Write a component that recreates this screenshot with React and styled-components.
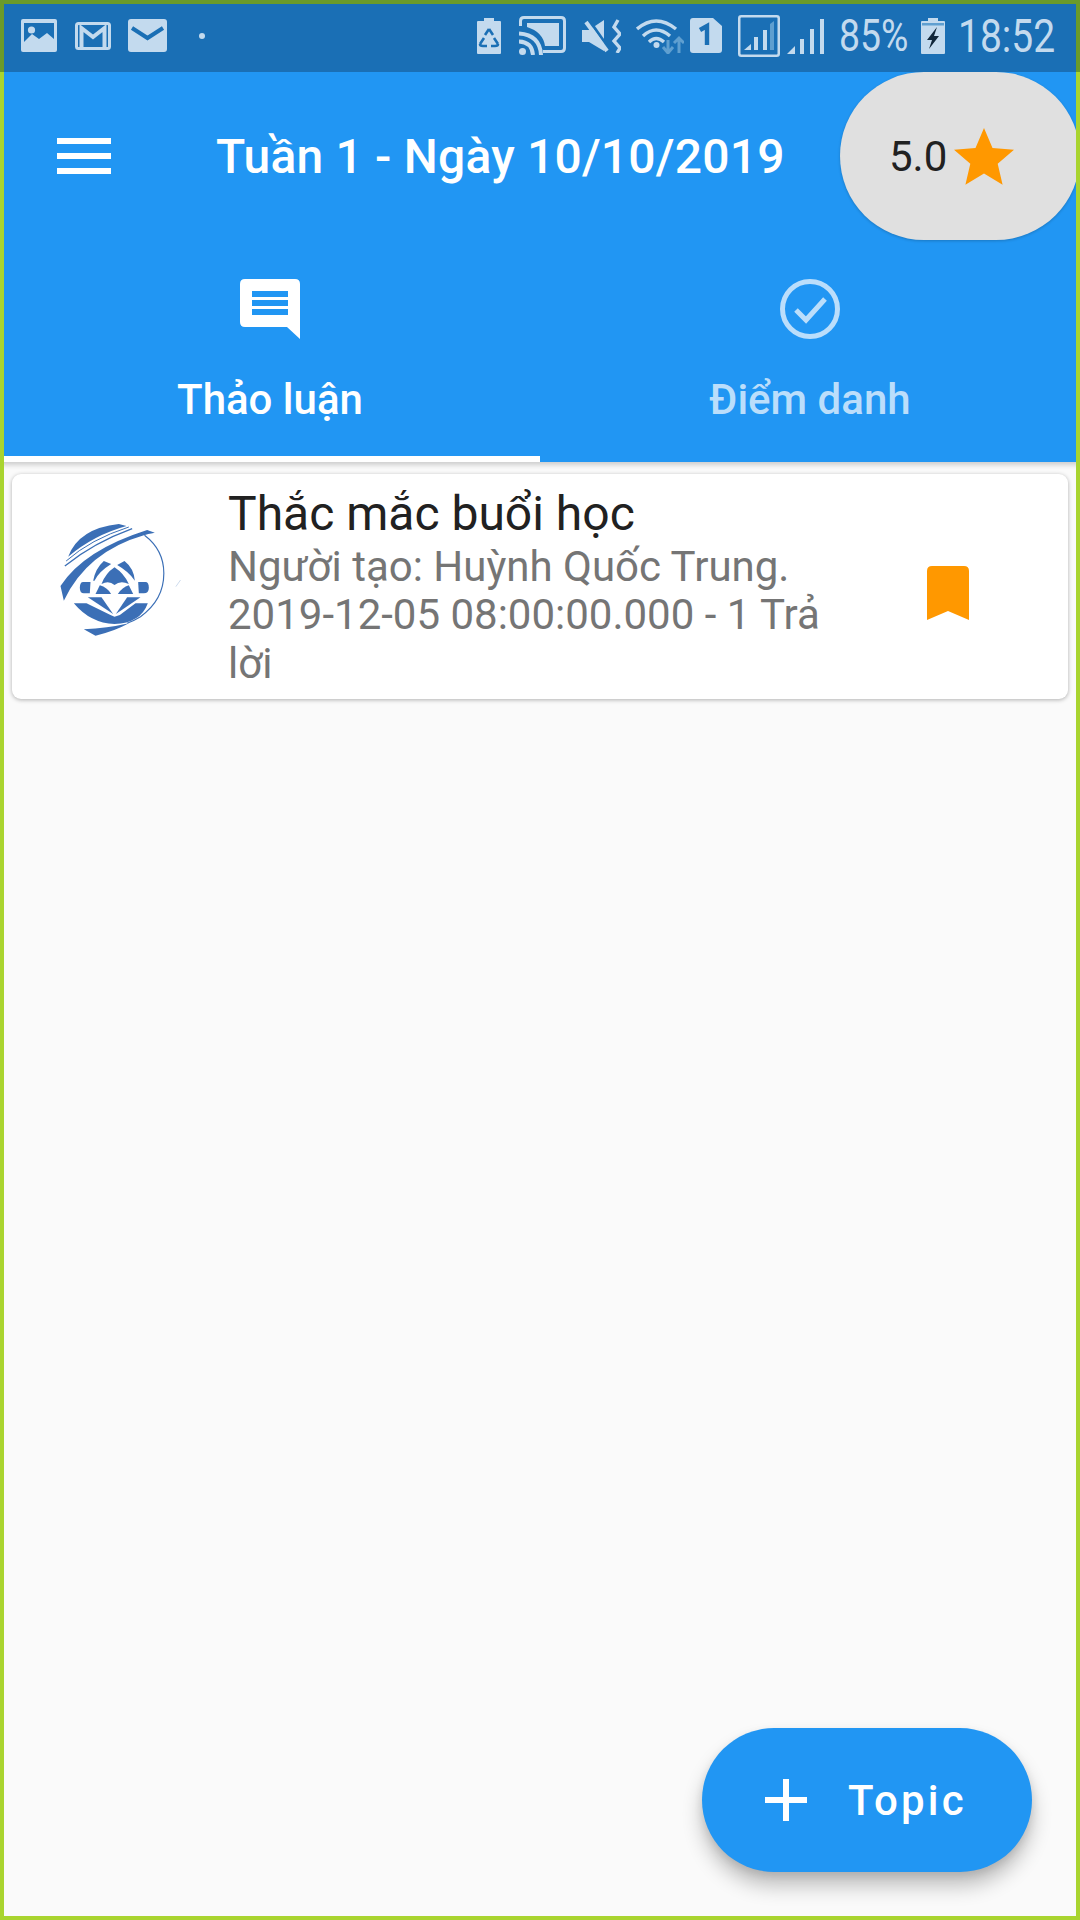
import React from 'react';
import styled, { createGlobalStyle } from 'styled-components';

const Global = createGlobalStyle`
  html, body { margin: 0; padding: 0; background: #fafafa; }
  * { box-sizing: border-box; }
`;

const Frame = styled.div`
  width: 1080px;
  height: 1920px;
  position: relative;
  overflow: hidden;
  display: flex;
  flex-direction: column;
  background: #fafafa;
  font-family: Roboto, "Noto Sans", sans-serif;
  &::after {
    content: "";
    position: absolute;
    inset: 0;
    border: 4px solid #a9d42f;
    pointer-events: none;
    z-index: 3;
  }
`;

const StatusBar = styled.div`
  height: 72px;
  flex: none;
  position: relative;
  z-index: 4;
  padding: 0 22px 5px 17px;
  background: #1a6fb5;
  border: solid #6a9a2a;
  border-width: 4px 4px 0 4px;
  display: flex;
  align-items: center;
  justify-content: space-between;
  color: #c3daee;
`;

const StatusGroup = styled.div`
  display: flex;
  align-items: center;
`;

const Slot = styled.span`
  display: flex;
  align-items: center;
  margin-left: ${p => p.$ml || 0}px;
`;

const StatusText = styled.span`
  display: block;
  width: ${p => p.$w}px;
  margin-left: ${p => p.$ml}px;
  font-size: ${p => p.$size}px;
  line-height: 1;
  white-space: nowrap;
  transform: scaleX(${p => p.$sx});
  transform-origin: left center;
`;

const AppBar = styled.header`
  background: #2196f3;
  height: 390px;
  flex: none;
  display: flex;
  flex-direction: column;
  box-shadow: 0 3px 5px rgba(0,0,0,0.18);
  position: relative;
  z-index: 1;
`;

const TopRow = styled.div`
  height: 168px;
  display: flex;
  align-items: center;
  position: relative;
`;

const Menu = styled.button`
  background: none;
  border: 0;
  padding: 0;
  width: 54px;
  height: 36px;
  margin-left: 57px;
  display: flex;
  flex-direction: column;
  justify-content: space-between;
`;

const MenuLine = styled.span`
  display: block;
  height: 6px;
  width: 54px;
  background: #fff;
`;

const Title = styled.h1`
  margin: 2px 0 0 105px;
  font-size: 48px;
  letter-spacing: 0.2px;
  font-weight: 500;
  color: #fff;
  white-space: nowrap;
  line-height: 1;
`;

const RatingPill = styled.div`
  position: absolute;
  left: 840px;
  top: 0;
  width: 240px;
  height: 168px;
  background: #e0e0e0;
  border-radius: 84px;
  display: flex;
  align-items: center;
  padding-left: 49px;
  box-shadow: 0 1px 3px rgba(0,0,0,0.2);
`;

const RatingText = styled.span`
  font-size: 42px;
  color: #212121;
  font-weight: 400;
`;

const StarWrap = styled.span`
  display: flex;
  margin-left: 7px;
`;

const TabRow = styled.div`
  flex: 1;
  display: flex;
`;

const Tab = styled.div`
  width: 50%;
  height: 222px;
  display: flex;
  flex-direction: column;
  align-items: center;
  padding-top: 39px;
  color: ${p => (p.$active ? '#fff' : '#bbdefb')};
  border-bottom: 6px solid ${p => (p.$active ? '#fff' : 'transparent')};
`;

const TabLabel = styled.span`
  font-size: 42px;
  font-weight: 500;
  line-height: 1;
  margin-top: 40px;
  white-space: nowrap;
`;

const List = styled.main`
  flex: 1;
  padding: 12px 12px 0 12px;
`;

const Card = styled.article`
  background: #fff;
  border-radius: 9px;
  height: 225px;
  width: 1056px;
  display: flex;
  align-items: flex-start;
  box-shadow: 0 1px 4px rgba(0,0,0,0.3);
`;

const Logo = styled.div`
  width: 216px;
  flex: none;
  padding: 46px 0 0 45px;
  line-height: 0;
`;

const CardBody = styled.div`
  width: 600px;
  flex: none;
  padding-top: 13px;
`;

const CardTitle = styled.div`
  font-size: 48px;
  color: #212121;
  line-height: 54px;
  white-space: nowrap;
`;

const CardSub = styled.div`
  font-size: 42px;
  color: #757575;
  line-height: 48.4px;
  margin-top: 2px;
`;

const Bookmark = styled.div`
  margin-left: 99px;
  padding-top: 92px;
  flex: none;
  line-height: 0;
`;

const Fab = styled.button`
  position: absolute;
  left: 702px;
  top: 1728px;
  width: 330px;
  height: 144px;
  border: 0;
  border-radius: 72px;
  background: #2196f3;
  color: #fff;
  display: flex;
  align-items: center;
  padding: 0 0 0 63px;
  box-shadow: 0 14px 20px rgba(0,0,0,0.24), 0 4px 8px rgba(0,0,0,0.1);
  font-family: Roboto, sans-serif;
`;

const FabLabel = styled.span`
  font-size: 42px;
  font-weight: 500;
  letter-spacing: 3.2px;
  margin: 2px 0 0 41px;
  line-height: 1;
`;

const L = '#c3daee';
const D = '#1a6fb5';
const M = '#5f9fd0';

const ImgIcon = () => (
  <svg width="36" height="33" viewBox="0 0 36 33"><rect width="36" height="33" rx="2" fill={L}/><path d="M3 4 H33 V20 L26 14 L18 20 L11 15 L3 23Z" fill={D}/><circle cx="10.5" cy="11" r="3.6" fill={L}/></svg>
);
const GmailOutline = () => (
  <svg width="36" height="28" viewBox="0 0 36 28"><rect x="1.5" y="1.5" width="33" height="25" rx="2" fill="none" stroke={L} strokeWidth="3"/><path d="M6.5 26 V6 L18 15 L29.5 6 V26" fill="none" stroke={L} strokeWidth="4"/></svg>
);
const MailFilled = () => (
  <svg width="39" height="33" viewBox="0 0 39 33"><rect width="39" height="33" rx="3" fill={L}/><path d="M4 9 L19.5 19 L35 9" fill="none" stroke={D} strokeWidth="4"/></svg>
);
const BatteryRecycle = () => (
  <svg width="24" height="36" viewBox="0 0 24 36"><path d="M7 0 H17 V3 H23 Q24 3 24 4 V35 Q24 36 23 36 H1 Q0 36 0 35 V4 Q0 3 1 3 H7Z" fill={L}/><path d="M12 11 L16 17 M8 17 L12 11 M3 26 L7 20 M3 26 Q3 28 6 28 H10 M21 26 L17 20 M21 26 Q21 28 18 28 H14" stroke={D} strokeWidth="2.6" fill="none"/></svg>
);
const Cast = () => (
  <svg width="47" height="39" viewBox="0 0 47 39"><path d="M1.5 10 V5 Q1.5 1.5 5 1.5 H42 Q45.5 1.5 45.5 5 V32 Q45.5 35.5 42 35.5 H24" fill="none" stroke={L} strokeWidth="3"/><path d="M8 7 H40 V30 H26 Q24 16 8 11Z" fill={L}/><path d="M0 17.5 Q21 19 22 39 M0 25.5 Q13 26 14 39" fill="none" stroke={L} strokeWidth="4"/><circle cx="3.5" cy="35.5" r="3.5" fill={L}/></svg>
);
const MuteVibrate = () => (
  <svg width="39" height="34" viewBox="0 0 39 34"><path d="M0 11 H7 L22 1 V32 L7 23 H0Z" fill={L}/><path d="M7 1 L28 31" stroke={D} strokeWidth="3"/><path d="M4 3 L25 32" stroke={L} strokeWidth="4"/><path d="M36 1 L32 8 L38 15 L32 22 L38 29 L35 34" fill="none" stroke={L} strokeWidth="3.4"/></svg>
);
const WifiIcon = () => (
  <svg width="48" height="36" viewBox="0 0 48 36"><path d="M1 11 Q20 -5 40 11 M7 18 Q20 6 34 18 M13 24 Q20 17 28 24" fill="none" stroke={L} strokeWidth="3.4"/><circle cx="20.5" cy="27" r="3" fill={L}/><path d="M32 22 V35 M27 29 L32 35 L37 29" fill="none" stroke={M} strokeWidth="3"/><path d="M43 35 V20 M38 25 L43 20 L48 25" fill="none" stroke={M} strokeWidth="3"/></svg>
);
const SimOne = () => (
  <svg width="32" height="35" viewBox="0 0 32 35"><path d="M3 0 H23 L32 8 V32 Q32 35 29 35 H3 Q0 35 0 32 V3 Q0 0 3 0Z" fill={L}/><path d="M10 12 L17 8 V27" fill="none" stroke={D} strokeWidth="4.4"/></svg>
);
const SignalBox = () => (
  <svg width="42" height="42" viewBox="0 0 42 42"><rect x="1.25" y="1.25" width="39.5" height="39.5" rx="2" fill="none" stroke={L} strokeWidth="2.5"/><path d="M6 35 L13 29 V35Z" fill={L}/><rect x="16" y="22" width="4" height="13" fill={L}/><rect x="25" y="15" width="4" height="20" fill={L}/><path d="M32 9 L36 6 V35 H32Z" fill={M}/></svg>
);
const SignalBars = () => (
  <svg width="37" height="36" viewBox="0 0 37 36"><path d="M0 36 L8 28 V36Z" fill={L}/><rect x="13" y="21" width="4" height="15" fill={L}/><rect x="23" y="11" width="4" height="25" fill={L}/><rect x="33" y="1" width="4" height="35" fill={L}/></svg>
);
const BatteryCharge = () => (
  <svg width="24" height="36" viewBox="0 0 24 36"><path d="M7 0 H17 V3 H23 Q24 3 24 4 V35 Q24 36 23 36 H1 Q0 36 0 35 V4 Q0 3 1 3 H7Z" fill={L}/><rect x="1" y="5" width="22" height="2.5" fill={M}/><path d="M16 9 L6 22 H11 L8 31 L18 18 H13 L16 9Z" fill="#10263a"/></svg>
);
const StatusDot = () => (
  <svg width="6" height="6" viewBox="0 0 6 6"><circle cx="3" cy="3" r="3" fill={L}/></svg>
);

const ChatIcon = () => (
  <svg width="60" height="60" viewBox="0 0 60 60"><path d="M5 0 H55 Q60 0 60 5 V60 L47 48 H5 Q0 48 0 43 V5 Q0 0 5 0Z" fill="#fff"/><rect x="12" y="12" width="36" height="6" fill="#2196f3"/><rect x="12" y="21" width="36" height="6" fill="#2196f3"/><rect x="12" y="30" width="36" height="6" fill="#2196f3"/></svg>
);
const CheckCircle = () => (
  <svg width="60" height="60" viewBox="0 0 60 60"><circle cx="30" cy="30" r="27.5" fill="none" stroke="#bbdefb" strokeWidth="5"/><path d="M16 31 L26 41 L45 20" fill="none" stroke="#bbdefb" strokeWidth="5"/></svg>
);
const Star = () => (
  <svg width="60" height="57" viewBox="0 0 60 57"><path d="M30 0 L38.5 20 L60 21.7 L43.7 35.8 L48.6 56.8 L30 45.6 L11.4 56.8 L16.3 35.8 L0 21.7 L21.5 20Z" fill="#ff9800"/></svg>
);
const BookmarkIcon = () => (
  <svg width="42" height="54" viewBox="0 0 42 54"><path d="M5 0 H37 Q42 0 42 5 V54 L21 45 L0 54 V5 Q0 0 5 0Z" fill="#ff9800"/></svg>
);
const PlusIcon = () => (
  <svg width="42" height="42" viewBox="0 0 42 42"><rect x="18" y="0" width="6" height="42" fill="#fff"/><rect x="0" y="18" width="42" height="6" fill="#fff"/></svg>
);
const UniLogo = () => (
  <svg width="127" height="120" viewBox="170 180 380 360" fill="#3b6fb6">
    <path d="M203 290 Q235 205 355 192 L378 198 Q280 225 203 290Z"/>
    <path d="M197 303 Q270 238 385 201" fill="none" stroke="#3b6fb6" strokeWidth="3"/>
    <path d="M193 318 Q280 248 395 206" fill="none" stroke="#3b6fb6" strokeWidth="4"/>
    <path d="M180 378 Q250 270 440 210 L463 218 Q440 222 430 226 Q260 275 190 422Z"/>
    <path d="M432 226 Q490 270 490 340 Q490 420 420 470 Q400 482 380 490" fill="none" stroke="#3b6fb6" strokeWidth="3.5"/>
    <path d="M310 303 L332 312 Q295 335 282 362 L278 362 Q285 325 310 303Z"/>
    <path d="M372 303 L350 315 Q385 335 403 362 Q400 325 372 303Z"/>
    <path d="M342 322 Q370 340 385 372 Q360 360 342 375 Q325 360 303 372 Q315 340 342 322Z"/>
    <path d="M248 366 H270 L268 400 H250 Q238 400 238 383 Q238 366 248 366Z"/>
    <path d="M415 366 H435 Q445 366 445 383 Q445 400 430 400 H415 L413 366Z"/>
    <path d="M285 402 L298 376 Q320 382 332 402Z"/>
    <path d="M398 402 L385 376 Q365 382 352 402Z"/>
    <path d="M262 412 H303 L338 462Z"/>
    <path d="M420 412 H380 L346 462Z"/>
    <path d="M220 430 Q270 490 342 492 Q420 490 442 430 L405 430 L358 465 L342 470 L330 465 L258 430Z"/>
    <path d="M250 508 Q320 505 385 490 Q340 515 285 527Z"/>
    <path d="M526 380 L540 360" fill="none" stroke="#9ab6da" strokeWidth="1.5"/>
  </svg>
);

export default function App() {
  return (
    <Frame>
      <Global />
      <StatusBar>
        <StatusGroup>
          <ImgIcon />
          <Slot $ml={18}><GmailOutline /></Slot>
          <Slot $ml={17}><MailFilled /></Slot>
          <Slot $ml={32}><StatusDot /></Slot>
        </StatusGroup>
        <StatusGroup>
          <BatteryRecycle />
          <Slot $ml={18}><Cast /></Slot>
          <Slot $ml={16}><MuteVibrate /></Slot>
          <Slot $ml={15}><WifiIcon /></Slot>
          <Slot $ml={6}><SimOne /></Slot>
          <Slot $ml={16}><SignalBox /></Slot>
          <Slot $ml={7}><SignalBars /></Slot>
          <StatusText $ml={15} $w={69} $size={44} $sx={0.85}>85%</StatusText>
          <Slot $ml={13}><BatteryCharge /></Slot>
          <StatusText $ml={13} $w={96} $size={47} $sx={0.83}>18:52</StatusText>
        </StatusGroup>
      </StatusBar>
      <AppBar>
        <TopRow>
          <Menu aria-label="menu"><MenuLine /><MenuLine /><MenuLine /></Menu>
          <Title>Tuần 1 - Ngày 10/10/2019</Title>
          <RatingPill>
            <RatingText>5.0</RatingText>
            <StarWrap><Star /></StarWrap>
          </RatingPill>
        </TopRow>
        <TabRow>
          <Tab $active><ChatIcon /><TabLabel>Thảo luận</TabLabel></Tab>
          <Tab><CheckCircle /><TabLabel>Điểm danh</TabLabel></Tab>
        </TabRow>
      </AppBar>
      <List>
        <Card>
          <Logo><UniLogo /></Logo>
          <CardBody>
            <CardTitle>Thắc mắc buổi học</CardTitle>
            <CardSub>Người tạo: Huỳnh Quốc Trung. 2019-12-05 08:00:00.000 - 1 Trả lời</CardSub>
          </CardBody>
          <Bookmark><BookmarkIcon /></Bookmark>
        </Card>
      </List>
      <Fab>
        <PlusIcon />
        <FabLabel>Topic</FabLabel>
      </Fab>
    </Frame>
  );
}
